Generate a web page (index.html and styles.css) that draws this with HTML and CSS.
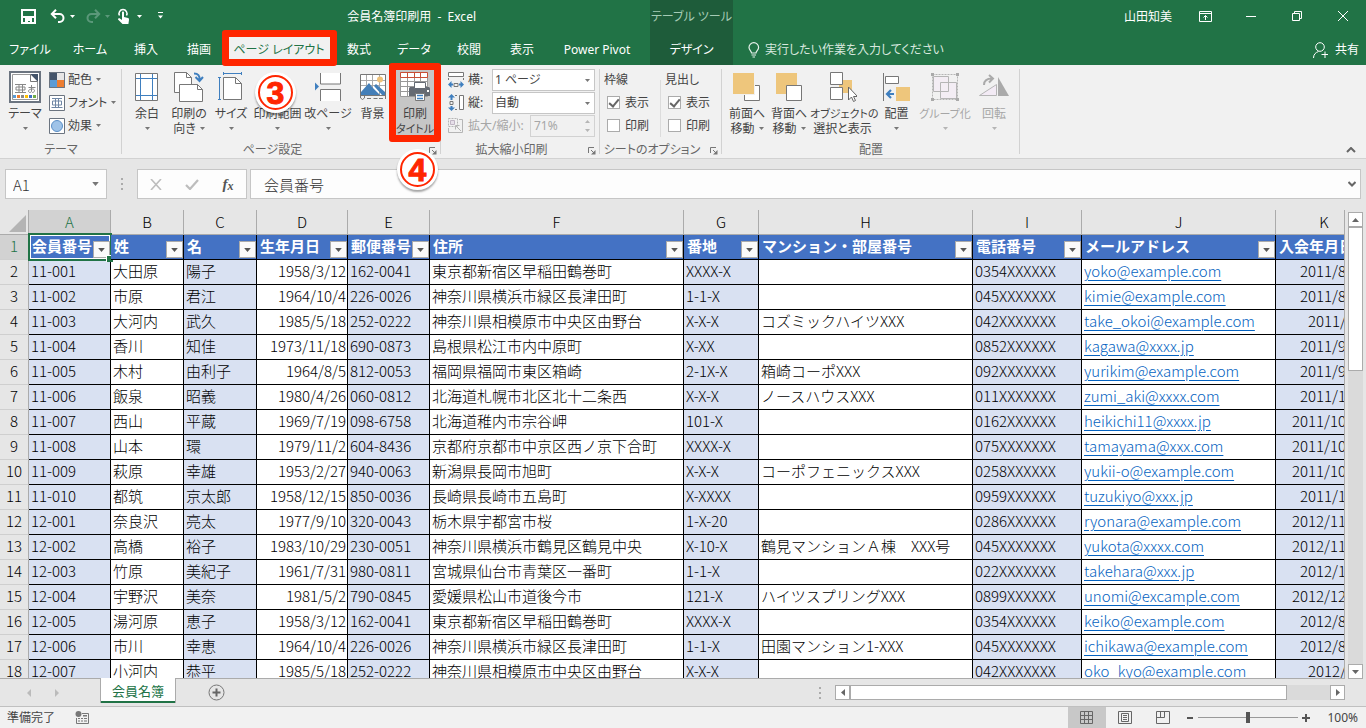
FILE: index.html
```html
<!DOCTYPE html>
<html lang="ja">
<head>
<meta charset="utf-8">
<meta name="viewport" content="width=device-width, initial-scale=1">
<title>会員名簿印刷用 - Excel</title>
<link rel="stylesheet" href="styles.css">
</head>
<body>
<svg class="symbols" aria-hidden="true">
  <symbol id="caret" viewBox="0 0 5 3"><path d="M0 0h5L2.500 3z"/></symbol>
  <symbol id="launch" viewBox="0 0 8 8"><path d="M.5 6V.5H6M3 3l3 3" fill="none" stroke="#777"/><path d="M7.500 3v4.500H3z" fill="#777"/></symbol>
</svg>

<header class="titlebar">
  <div class="title-left">
    <div class="quick">
      <button aria-label="上書き保存"><svg width="15" height="15" viewBox="0 0 15 15"><path d="M1 1h13v13H1z" fill="none" stroke="#fff" stroke-width="2"/><path d="M2 7h11v2H2zM4 9h7v5H9v-2H7v2H4z" fill="#fff"/></svg></button>
      <button aria-label="元に戻す"><svg width="16" height="15" viewBox="0 0 16 15"><path d="M2 5h7.500a4 4 0 0 1 0 8H8M6 .800 1.800 5 6 9.200" fill="none" stroke="#fff" stroke-width="2"/></svg></button>
      <button aria-label="元に戻す一覧"><svg class="caret light"><use href="#caret"/></svg></button>
      <button aria-label="やり直し"><svg width="16" height="15" viewBox="0 0 16 15"><path d="M14 5H6.500a4 4 0 0 0 0 8H8M10 .800 14.200 5 10 9.200" fill="none" stroke="#5b987a" stroke-width="2"/></svg></button>
      <button aria-label="やり直し一覧"><svg class="caret faded"><use href="#caret"/></svg></button>
      <button aria-label="タッチ/マウス モード"><svg width="14" height="17" viewBox="0 0 14 17"><path d="M2.500 7.500a4 4 0 1 1 7 0" fill="none" stroke="#fff" stroke-width="1.500"/><path d="M5 4.500c0-1.400 2-1.400 2 0V9l4 1c1 .300 1 1 1 2l-.600 4H5.500L1 11.500c0-1.200 1.500-1.500 2.200-.700L5 12z" fill="#fff"/></svg></button>
      <button aria-label="モード一覧"><svg class="caret light"><use href="#caret"/></svg></button>
      <button aria-label="クイック アクセス ツール バーのカスタマイズ"><svg width="7" height="8" viewBox="0 0 7 8"><path d="M1 0h5v1H1zM1 3.500h5L3.500 6.500z" fill="#fff"/></svg></button>
    </div>
    <h1 class="doc-title">会員名簿印刷用&nbsp; -&nbsp; Excel</h1>
  </div>
  <div class="context"><span>テーブル ツール</span><button>デザイン</button></div>
  <div class="title-right">
    <button class="user">山田知美</button>
    <button class="win" aria-label="リボンの表示オプション"><svg width="13" height="11" viewBox="0 0 13 11"><path d="M.5.500h12v10H.5zM.5 2.500h12M6.500 9V4.500M4.500 6.500l2-2 2 2" fill="none" stroke="#fff"/></svg></button>
    <button class="win" aria-label="最小化"><svg width="10" height="10" viewBox="0 0 10 10"><path d="M0 5.500h10" stroke="#fff"/></svg></button>
    <button class="win" aria-label="元に戻す(縮小)"><svg width="10" height="10" viewBox="0 0 10 10"><path d="M.5 2.500h7v7h-7zM2.500 2.500v-2h7v7h-2" fill="none" stroke="#fff"/></svg></button>
    <button class="win" aria-label="閉じる"><svg width="10" height="10" viewBox="0 0 10 10"><path d="M0 0l10 10M10 0 0 10" stroke="#fff"/></svg></button>
  </div>
  <nav class="tabs">
    <button>ファイル</button><button>ホーム</button><button>挿入</button><button>描画</button>
    <button class="active">ページ レイアウト<span class="mark"></span></button>
    <button>数式</button><button>データ</button><button>校閲</button><button>表示</button><button>Power Pivot</button>
  </nav>
  <div class="tools">
    <label class="tell"><svg width="12" height="16" viewBox="0 0 12 16"><path d="M3.500 11c0-2-2.500-3-2.500-5.500a4.800 4.800 0 0 1 9.600 0C10.600 8 8 9 8 11zM3.500 13H8M4.500 15H7" fill="none" stroke="#e8f2ec" stroke-width="1.200"/></svg>
    <input type="text" placeholder="実行したい作業を入力してください" aria-label="操作アシスト"></label>
    <button class="share"><svg width="16" height="16" viewBox="0 0 16 16"><circle cx="7" cy="5" r="4.300" fill="none" stroke="#fff"/><path d="M.5 16c0-3.500 2-5.500 5-6.500M12 9.500V16M8.500 12.500H15" fill="none" stroke="#fff"/></svg>共有</button>
  </div>
</header>

<section class="ribbon" aria-label="ページ レイアウト">
  <div class="group g-theme">
    <div class="body">
      <button class="big"><span class="ico"><svg width="32" height="32" viewBox="0 0 32 32"><path d="M1 1h30v30H1z" fill="#fff" stroke="#6b7480" stroke-width="2"/><path d="M3.500 3.500h18l7 7v18h-25z" fill="#fff" stroke="#999"/><path d="M21 3h8v8z" fill="#44546a"/><path d="M21.500 3.500v7h7" fill="#fff" stroke="#777"/><path d="M6 13.500h11M6 21.500h11M7 16h9v3H7zM10 13.500v8M13.500 13.500v8M19.500 16.500h7M22.500 14v6c0 2-3 2-3 0 0-2 6-3 6-.500 0 2-2 2-2.500 2" fill="none" stroke="#888"/><path d="M4 24h3v3H4z" fill="#5b9bd5"/><path d="M8 24h3v3H8z" fill="#ed7d31"/><path d="M12 24h3v3h-3z" fill="#8a8a8a"/><path d="M16 24h3v3h-3z" fill="#ffc000"/><path d="M20 24h3v3h-3z" fill="#4472c4"/><path d="M24 24h3v3h-3z" fill="#70ad47"/></svg></span>テーマ<br><svg class="caret"><use href="#caret"/></svg></button>
      <div class="stack">
        <button><svg width="16" height="16" viewBox="0 0 16 16"><path d="M0 0h8v8H0z" fill="#44546a"/><path d="M8 0h8v8H8z" fill="#e7e6e6"/><path d="M0 8h8v8H0z" fill="#5b9bd5"/><path d="M8 8h8v8H8z" fill="#ed7d31"/><path d="M.5.500h15v15H.5z" fill="none" stroke="#6b7480"/></svg>配色<svg class="caret"><use href="#caret"/></svg></button>
        <button><svg width="16" height="16" viewBox="0 0 16 16"><path d="M.5.500h15v15H.5z" fill="#fff" stroke="#6b7480"/><path d="M3 3.500h10M2.500 12.500h11M3.500 6h9v4h-9zM6.500 3.500v9M9.500 3.500v9" fill="none" stroke="#6f86a5"/></svg>フォント<svg class="caret"><use href="#caret"/></svg></button>
        <button><svg width="16" height="16" viewBox="0 0 16 16"><path d="M.5.500h15v15H.5z" fill="#fff" stroke="#6b7480"/><circle cx="8" cy="8" r="5.500" fill="#9fc3e8" stroke="#5b8fc7"/></svg>効果<svg class="caret"><use href="#caret"/></svg></button>
      </div>
    </div>
    <div class="caption">テーマ</div>
  </div>

  <div class="group g-page">
    <div class="body">
      <button class="big"><span class="ico"><svg width="24" height="30" viewBox="0 0 24 30"><path d="M.5 1.500h22v27H.5z" fill="#fff" stroke="#777"/><path d="M5.500 2v26M17.500 2v26M1 6.500h21M1 23.500h21" stroke="#3f7fbf"/></svg></span>余白<br><svg class="caret"><use href="#caret"/></svg></button>
      <button class="big"><span class="ico"><svg width="30" height="30" viewBox="0 0 30 30"><path d="M.5.500h12l5 5v15H.5z" fill="#fff" stroke="#777"/><path d="M12.500.500v5h5" fill="none" stroke="#777"/><path d="M5.500 12.500h18l5 5v12h-23z" fill="#fff" stroke="#777"/><path d="M23.500 12.500v5h5" fill="none" stroke="#777"/><path d="M20 1.500c4 0 6 2 5.500 6.500M21.500 5l4 4 3.500-4" fill="none" stroke="#3f7fbf" stroke-width="2"/></svg></span>印刷の<br>向き<svg class="caret after"><use href="#caret"/></svg></button>
      <button class="big"><span class="ico"><svg width="26" height="30" viewBox="0 0 26 30"><path d="M5 1.500h19M5.500 0v3M23.500 0v3M1.500 5v23M0 5.500h3M0 27.500h3" stroke="#3f7fbf"/><path d="M5.500 5.500h12l6 6v16h-18z" fill="#fff" stroke="#777"/><path d="M17.500 5.500v6h6" fill="none" stroke="#777"/></svg></span>サイズ<br><svg class="caret"><use href="#caret"/></svg></button>
      <button class="big"><span class="ico"><svg width="26" height="30" viewBox="0 0 26 30"><path d="M9 1.500h8M.5 17v4M25.500 17v4" fill="none" stroke="#777"/></svg></span>印刷範囲<br><svg class="caret"><use href="#caret"/></svg><span class="badge" aria-hidden="true">3</span></button>
      <button class="big"><span class="ico"><svg width="26" height="30" viewBox="0 0 26 30"><path d="M5.500 1v11h20V1M5.500 29V17.500h20V29" fill="#fff" stroke="#777"/><path d="M0 10.500 4 14.500 0 18.500z" fill="#3f7fbf"/></svg></span>改ページ<br><svg class="caret"><use href="#caret"/></svg></button>
      <button class="big"><span class="ico"><svg width="28" height="28" viewBox="0 0 28 28"><path d="M1.500 1.500h25v21h-25z" fill="#fff" stroke="#777"/><path d="M2 7.500h24M2 12.500h24M7.500 2v20M13.500 2v20M20.500 2v20" stroke="#aaa"/><circle cx="21" cy="6.500" r="3" fill="#eec27a"/><path d="M2 22v-3l8-9 4 5 5 5 2 2zM15 13l2-2 9 8v3h-3z" fill="#447fb8"/><path d="M1.500 22v3l2 1.500 2-1.500v-2M8 25.500h4M14.500 25.500h4M20 25.500h4M26.500 22v4" fill="none" stroke="#777"/></svg></span>背景<br>&nbsp;</button>
      <button class="big pressed"><span class="ico"><svg width="30" height="30" viewBox="0 0 30 30"><path d="M.5.500h27v24H.5z" fill="#fff" stroke="#999"/><path d="M1 9.500h26M1 14.500h26M1 19.500h26M7.500 6v18M14.500 6v18M20.500 6v18" stroke="#999"/><path d="M.5.500h27v5H.5zM7.500 1v4M14.500 1v4M20.500 1v4" fill="#fff" stroke="#c84e35"/><path d="M11 15c-1.500 0-2 .5-2 2v7h21v-7c0-1.500-.5-2-2-2z" fill="#646a73"/><path d="M14.500 10.500h11v6h-11z" fill="#fff" stroke="#646a73"/><path d="M15.500 21.500h9v7h-9z" fill="#fff" stroke="#777"/><path d="M17 23.500h6M17 26.500h6" stroke="#3f7fbf" stroke-width="1.500"/><path d="M27 18h2v2h-2z" fill="#fff"/></svg></span>印刷<br><span class="tight">タイトル</span><span class="mark"></span><span class="badge" aria-hidden="true">4</span></button>
    </div>
    <div class="caption">ページ設定<button aria-label="ページ設定の詳細"><svg width="8" height="8"><use href="#launch"/></svg></button></div>
  </div>

  <div class="group g-scale">
    <div class="body stack">
      <div class="field"><svg width="16" height="17" viewBox="0 0 16 17"><path d="M.5 1.500h15v4H.5z" fill="#fff" stroke="#777"/><path d="M.5 7v2M15.500 7v2M6 12.500h4v3H6z" fill="none" stroke="#777"/><path d="M0 13.500 3.500 10v2.500H5v2H3.500V17zM16 13.500 12.500 10v2.500H11v2h1.500V17z" fill="#3f7fbf"/></svg>
        <label for="wide">横:</label><span class="select"><select id="wide"><option>1 ページ</option></select><svg class="caret"><use href="#caret"/></svg></span></div>
      <div class="field"><svg width="16" height="17" viewBox="0 0 16 17"><path d="M11.500 1.500h4v14h-4z" fill="#fff" stroke="#777"/><path d="M7 1.500h2M7 15.500h2M2 7.500h3v3H2z" fill="none" stroke="#777"/><path d="M3.500 0 7 3.500H4.500V6h-2V3.500H0zM3.500 17 7 13.500H4.500V12h-2v1.500H0z" fill="#3f7fbf"/></svg>
        <label for="tall">縦:</label><span class="select"><select id="tall"><option>自動</option></select><svg class="caret"><use href="#caret"/></svg></span></div>
      <div class="field off"><svg width="16" height="17" viewBox="0 0 16 17"><path d="M.5 1.500h9v8h-9z" fill="none" stroke="#b5b5b5" stroke-dasharray="2 1"/><path d="M2.500 3.500h4v4h-4z" fill="#e6dfe9" stroke="#c0b5c4"/><path d="M.5 11v4.500h14V2.500H11M13 14 8 9M7.500 12.500V8.500h4" fill="none" stroke="#b5b5b5"/></svg>
        <label for="scale">拡大/縮小:</label><span class="spin"><input id="scale" type="text" value="71%" disabled><svg width="5" height="12" viewBox="0 0 5 12"><path d="M0 3l2.500-3L5 3zM0 9h5L2.500 12z" fill="#b5b5b5"/></svg></span></div>
    </div>
    <div class="caption">拡大縮小印刷<button aria-label="拡大縮小の詳細"><svg width="8" height="8"><use href="#launch"/></svg></button></div>
  </div>

  <div class="group g-opts">
    <div class="body">
      <fieldset><legend>枠線</legend><label><input type="checkbox" checked>表示</label><label><input type="checkbox">印刷</label></fieldset>
      <fieldset><legend>見出し</legend><label><input type="checkbox" checked>表示</label><label><input type="checkbox">印刷</label></fieldset>
    </div>
    <div class="caption">シートのオプション<button aria-label="シートの詳細"><svg width="8" height="8"><use href="#launch"/></svg></button></div>
  </div>

  <div class="group g-arrange">
    <div class="body">
      <button class="big"><span class="ico"><svg width="28" height="30" viewBox="0 0 28 30"><path d="M11.500 13.500h15v15h-15z" fill="#fff" stroke="#777"/><path d="M0 1h22v22H0z" fill="#f1f1f1"/><path d="M0 1h21v21H0z" fill="#eec67c"/></svg></span>前面へ<br>移動<svg class="caret after"><use href="#caret"/></svg></button>
      <button class="big"><span class="ico"><svg width="28" height="30" viewBox="0 0 28 30"><path d="M1 1h21v21H1z" fill="#eec67c"/><path d="M11.500 13.500h15v15h-15z" fill="#fff" stroke="#777"/></svg></span>背面へ<br>移動<svg class="caret after"><use href="#caret"/></svg></button>
      <button class="big"><span class="ico"><svg width="28" height="30" viewBox="0 0 28 30"><path d="M10 8h13v13H10z" fill="#eec67c"/><path d="M1.500.500h12v12h-12zM1.500 15.500h12v12h-12z" fill="#fff" stroke="#777"/><path d="M19.500 15v13l3-3 2 4.500 2-1-2-4h4z" fill="#fff" stroke="#666"/></svg></span><span class="tight">オブジェクトの</span><br>選択と表示</button>
      <button class="big"><span class="ico"><svg width="28" height="30" viewBox="0 0 28 30"><path d="M.5 1v28" stroke="#777"/><path d="M2.500 4.500h13v7h-13z" fill="#fff" stroke="#777"/><path d="M13 15h14v14H13z" fill="#eec67c"/><path d="M11 22H5M8 18l-4 4 4 4" fill="none" stroke="#3f7fbf" stroke-width="2.200"/></svg></span>配置<br><svg class="caret"><use href="#caret"/></svg></button>
      <button class="big" disabled><span class="ico"><svg width="28" height="30" viewBox="0 0 28 30"><path d="M1.500 2.500h25v25h-25z" fill="none" stroke="#b5b5b5" stroke-dasharray="2 1"/><path d="M2.500 4.500h15v15h-15zM9.500 10.500h16v16h-16z" fill="#f3ebf5" fill-opacity=".7" stroke="#b5b5b5"/><path d="M0 1h3v3H0zM25 1h3v3h-3zM0 26h3v3H0zM25 26h3v3h-3z" fill="#aaa"/></svg></span><span class="tight">グループ化</span><br><svg class="caret"><use href="#caret"/></svg></button>
      <button class="big" disabled><span class="ico"><svg width="32" height="30" viewBox="0 0 32 30"><path d="M1.500 23.500 18.500 12.500v11z" fill="#f3ebf5" stroke="#b5b5b5"/><path d="M20 5v19h11z" fill="#aaa"/><path d="M6 13c0-5 3-6.500 8-6.500M11 3l4 3.500-4 4" fill="none" stroke="#aaa" stroke-width="2"/></svg></span>回転<br><svg class="caret"><use href="#caret"/></svg></button>
    </div>
    <div class="caption">配置</div>
  </div>
  <button class="collapse" aria-label="リボンを折りたたむ"><svg width="10" height="6" viewBox="0 0 10 6"><path d="M1 5l4-4 4 4" fill="none" stroke="#666" stroke-width="2"/></svg></button>
</section>

<section class="formula">
  <div class="namebox"><input type="text" value="A1" aria-label="名前ボックス"><svg class="drop" viewBox="0 0 5 3"><use href="#caret"/></svg></div>
  <span class="dots"></span>
  <div class="fx">
    <button aria-label="キャンセル"><svg width="12" height="11" viewBox="0 0 12 11"><path d="M1 0l10 11M11 0 1 11" stroke="#bdbdbd" stroke-width="1.600"/></svg></button>
    <button aria-label="入力"><svg width="14" height="11" viewBox="0 0 14 11"><path d="M1 6l4 4 8-9" fill="none" stroke="#bdbdbd" stroke-width="2.200"/></svg></button>
    <button aria-label="関数の挿入"><i>f<sub>x</sub></i></button>
  </div>
  <div class="entry"><input type="text" value="会員番号" aria-label="数式バー"><svg width="8" height="6" viewBox="0 0 8 6"><path d="M.5 1 4 4.500 7.500 1" fill="none" stroke="#666" stroke-width="2"/></svg></div>
</section>

<main class="sheet">
  <div class="viewport">
    <table>
      <colgroup><col class="c0"><col class="c82"><col class="c73"><col class="c73"><col class="c91"><col class="c82"><col class="cF"><col class="cG"><col class="cH"><col class="cI"><col class="cJ"><col class="cK"></colgroup>
      <thead><tr><th class="corner"><svg width="17" height="17" viewBox="0 0 17 17"><path d="M17 0v17H0z" fill="#b4b4b4"/></svg></th><th class="on">A</th><th>B</th><th>C</th><th>D</th><th>E</th><th>F</th><th>G</th><th>H</th><th>I</th><th>J</th><th>K</th></tr></thead>
      <tbody>
        <tr class="fields"><th class="on">1</th><td class="cursor">会員番号<button aria-label="会員番号のフィルター"><svg><use href="#caret"/></svg></button></td><td>姓<button aria-label="姓のフィルター"><svg><use href="#caret"/></svg></button></td><td>名<button aria-label="名のフィルター"><svg><use href="#caret"/></svg></button></td><td>生年月日<button aria-label="生年月日のフィルター"><svg><use href="#caret"/></svg></button></td><td>郵便番号<button aria-label="郵便番号のフィルター"><svg><use href="#caret"/></svg></button></td><td>住所<button aria-label="住所のフィルター"><svg><use href="#caret"/></svg></button></td><td>番地<button aria-label="番地のフィルター"><svg><use href="#caret"/></svg></button></td><td>マンション・部屋番号<button aria-label="マンションのフィルター"><svg><use href="#caret"/></svg></button></td><td>電話番号<button aria-label="電話番号のフィルター"><svg><use href="#caret"/></svg></button></td><td>メールアドレス<button aria-label="メールアドレスのフィルター"><svg><use href="#caret"/></svg></button></td><td>入会年月日</td></tr>
        <tr><th>2</th><td>11-001</td><td>大田原</td><td>陽子</td><td>1958/3/12</td><td>162-0041</td><td>東京都新宿区早稲田鶴巻町</td><td>XXXX-X</td><td></td><td>0354XXXXXX</td><td><a href="#">yoko@example.com</a></td><td>2011/8/10</td></tr>
        <tr><th>3</th><td>11-002</td><td>市原</td><td>君江</td><td>1964/10/4</td><td>226-0026</td><td>神奈川県横浜市緑区長津田町</td><td>1-1-X</td><td></td><td>045XXXXXXX</td><td><a href="#">kimie@example.com</a></td><td>2011/8/20</td></tr>
        <tr><th>4</th><td>11-003</td><td>大河内</td><td>武久</td><td>1985/5/18</td><td>252-0222</td><td>神奈川県相模原市中央区由野台</td><td>X-X-X</td><td>コズミックハイツXXX</td><td>042XXXXXXX</td><td><a href="#">take_okoi@example.com</a></td><td>2011/9/1</td></tr>
        <tr><th>5</th><td>11-004</td><td>香川</td><td>知佳</td><td>1973/11/18</td><td>690-0873</td><td>島根県松江市内中原町</td><td>X-XX</td><td></td><td>0852XXXXXX</td><td><a href="#">kagawa@xxxx.jp</a></td><td>2011/9/10</td></tr>
        <tr><th>6</th><td>11-005</td><td>木村</td><td>由利子</td><td>1964/8/5</td><td>812-0053</td><td>福岡県福岡市東区箱崎</td><td>2-1X-X</td><td>箱崎コーポXXX</td><td>092XXXXXXX</td><td><a href="#">yurikim@example.com</a></td><td>2011/9/20</td></tr>
        <tr><th>7</th><td>11-006</td><td>飯泉</td><td>昭義</td><td>1980/4/26</td><td>060-0812</td><td>北海道札幌市北区北十二条西</td><td>X-X-X</td><td>ノースハウスXXX</td><td>011XXXXXXX</td><td><a href="#">zumi_aki@xxxx.com</a></td><td>2011/10/1</td></tr>
        <tr><th>8</th><td>11-007</td><td>西山</td><td>平蔵</td><td>1969/7/19</td><td>098-6758</td><td>北海道稚内市宗谷岬</td><td>101-X</td><td></td><td>0162XXXXXX</td><td><a href="#">heikichi11@xxxx.jp</a></td><td>2011/10/10</td></tr>
        <tr><th>9</th><td>11-008</td><td>山本</td><td>環</td><td>1979/11/2</td><td>604-8436</td><td>京都府京都市中京区西ノ京下合町</td><td>XXXX-X</td><td></td><td>075XXXXXXX</td><td><a href="#">tamayama@xxx.com</a></td><td>2011/10/20</td></tr>
        <tr><th>10</th><td>11-009</td><td>萩原</td><td>幸雄</td><td>1953/2/27</td><td>940-0063</td><td>新潟県長岡市旭町</td><td>X-X-X</td><td>コーポフェニックスXXX</td><td>0258XXXXXX</td><td><a href="#">yukii-o@example.com</a></td><td>2011/10/25</td></tr>
        <tr><th>11</th><td>11-010</td><td>都筑</td><td>京太郎</td><td>1958/12/15</td><td>850-0036</td><td>長崎県長崎市五島町</td><td>X-XXXX</td><td></td><td>0959XXXXXX</td><td><a href="#">tuzukiyo@xxx.jp</a></td><td>2011/11/1</td></tr>
        <tr><th>12</th><td>12-001</td><td>奈良沢</td><td>亮太</td><td>1977/9/10</td><td>320-0043</td><td>栃木県宇都宮市桜</td><td>1-X-20</td><td></td><td>0286XXXXXX</td><td><a href="#">ryonara@example.com</a></td><td>2012/11/10</td></tr>
        <tr><th>13</th><td>12-002</td><td>高橋</td><td>裕子</td><td>1983/10/29</td><td>230-0051</td><td>神奈川県横浜市鶴見区鶴見中央</td><td>X-10-X</td><td>鶴見マンションＡ棟　XXX号</td><td>045XXXXXXX</td><td><a href="#">yukota@xxxx.com</a></td><td>2012/11/20</td></tr>
        <tr><th>14</th><td>12-003</td><td>竹原</td><td>美紀子</td><td>1961/7/31</td><td>980-0811</td><td>宮城県仙台市青葉区一番町</td><td>1-1-X</td><td></td><td>022XXXXXXX</td><td><a href="#">takehara@xxx.jp</a></td><td>2012/12/1</td></tr>
        <tr><th>15</th><td>12-004</td><td>宇野沢</td><td>美奈</td><td>1981/5/2</td><td>790-0845</td><td>愛媛県松山市道後今市</td><td>121-X</td><td>ハイツスプリングXXX</td><td>0899XXXXXX</td><td><a href="#">unomi@excample.com</a></td><td>2012/12/10</td></tr>
        <tr><th>16</th><td>12-005</td><td>湯河原</td><td>恵子</td><td>1958/3/12</td><td>162-0041</td><td>東京都新宿区早稲田鶴巻町</td><td>XXXX-X</td><td></td><td>0354XXXXXX</td><td><a href="#">keiko@example.com</a></td><td>2012/8/10</td></tr>
        <tr><th>17</th><td>12-006</td><td>市川</td><td>幸恵</td><td>1964/10/4</td><td>226-0026</td><td>神奈川県横浜市緑区長津田町</td><td>1-1-X</td><td>田園マンション1-XXX</td><td>045XXXXXXX</td><td><a href="#">ichikawa@example.com</a></td><td>2012/8/20</td></tr>
        <tr><th>18</th><td>12-007</td><td>小河内</td><td>恭平</td><td>1985/5/18</td><td>252-0222</td><td>神奈川県相模原市中央区由野台</td><td>X-X-X</td><td></td><td>042XXXXXXX</td><td><a href="#">oko_kyo@example.com</a></td><td>2012/9/1</td></tr>
      </tbody>
    </table>
  </div>
  <div class="vscroll">
    <button aria-label="上へ"><svg width="7" height="4" viewBox="0 0 7 4"><path d="M0 4h7L3.500 0z" fill="#666"/></svg></button>
    <div class="track"><div class="thumb"></div></div>
    <button aria-label="下へ"><svg width="7" height="4" viewBox="0 0 7 4"><path d="M0 0h7L3.500 4z" fill="#666"/></svg></button>
  </div>
</main>

<section class="sheetbar">
  <div class="nav"><button aria-label="前のシート"><svg width="4" height="8" viewBox="0 0 4 8"><path d="M4 0v8L0 4z" fill="#bbb"/></svg></button><button aria-label="次のシート"><svg width="4" height="8" viewBox="0 0 4 8"><path d="M0 0v8l4-4z" fill="#bbb"/></svg></button></div>
  <button class="sheet-tab">会員名簿</button>
  <button class="add" aria-label="新しいシート"><svg width="17" height="17" viewBox="0 0 17 17"><circle cx="8.500" cy="8.500" r="7.500" fill="none" stroke="#777"/><path d="M8.500 4.500v8M4.500 8.500h8" stroke="#666" stroke-width="2"/></svg></button>
  <span class="dots"></span>
  <div class="hscroll">
    <button aria-label="左へ"><svg width="4" height="7" viewBox="0 0 4 7"><path d="M4 0v7L0 3.500z" fill="#666"/></svg></button>
    <div class="track"><div class="thumb"></div></div>
    <button aria-label="右へ"><svg width="4" height="7" viewBox="0 0 4 7"><path d="M0 0v7l4-3.500z" fill="#666"/></svg></button>
  </div>
</section>

<footer class="status">
  <span class="ready">準備完了</span>
  <svg width="14" height="13" viewBox="0 0 14 13"><path d="M7 2.500h6.500v10h-12V7" fill="none" stroke="#777"/><circle cx="3.500" cy="3" r="3" fill="#777"/><path d="M8 4h4v1.500H8zM3 7h2v1H3zM6 7h2v1H6zM9 7h3v1H9zM3 9.500h2v1H3zM6 9.500h2v1H6zM9 9.500h3v1H9z" fill="#777"/></svg>
  <div class="views">
    <button class="on" aria-label="標準"><svg width="14" height="13" viewBox="0 0 14 13"><path d="M.5.500h12v12H.5zM4.500.500v12M8.500.500v12M.5 4.500h12M.5 8.500h12" fill="none" stroke="#666"/></svg></button>
    <button aria-label="ページ レイアウト"><svg width="14" height="13" viewBox="0 0 14 13"><path d="M.5.500h13v12H.5zM3.500 2.500h7v8h-7zM5 4.500h4M5 6.500h4M5 8.500h4" fill="none" stroke="#666"/></svg></button>
    <button aria-label="改ページ プレビュー"><svg width="14" height="13" viewBox="0 0 14 13"><path d="M.5.500h13v12H.5zM4.500.500v6M.5 6.500h8v-6" fill="none" stroke="#666"/></svg></button>
  </div>
  <button class="step" aria-label="縮小"><svg width="8" height="8" viewBox="0 0 8 8"><path d="M1 4h6" stroke="#555" stroke-width="2"/></svg></button>
  <input class="zoom" type="range" min="0" max="100" value="50" aria-label="ズーム">
  <button class="step" aria-label="拡大"><svg width="8" height="8" viewBox="0 0 8 8"><path d="M0 4h8M4 0v8" stroke="#555" stroke-width="2"/></svg></button>
  <span class="percent">100%</span>
</footer>
</body>
</html>
```
FILE: styles.css
```css
* { box-sizing: border-box; }
body {
  margin: 0;
  height: 100vh;
  display: flex;
  flex-direction: column;
  overflow: hidden;
  background: #e6e6e6;
  color: #444;
  font: 12px/15px "Noto Sans", "Noto Sans CJK JP", sans-serif;
  font-feature-settings: "palt";
}
button, input, select {
  margin: 0;
  padding: 0;
  border: 0;
  border-radius: 0;
  background: none;
  color: inherit;
  font: inherit;
  font-feature-settings: inherit;
  white-space: nowrap;
}
svg { flex: none; }
.symbols { position: absolute; width: 0; height: 0; }
.caret { width: 5px; height: 3px; fill: #777; }
.caret.light { fill: #fff; }
.caret.faded { fill: #5b987a; }

/* title bar and tabs */
.titlebar {
  flex: none;
  display: grid;
  grid-template: 32px 33px / 650px 83px 1fr;
  background: #217346;
  color: #fff;
}
.title-left { display: flex; justify-content: space-between; align-items: center; padding: 0 174px 0 21px; }
.quick { display: grid; grid-template-columns: 29px 20px 15px 20px 12px 20px 20px 12px; height: 32px; }
.quick button { display: flex; align-items: center; }
.doc-title { margin: 0; font-size: 12px; font-weight: 400; white-space: nowrap; }
.context {
  grid-area: 1 / 2 / 3 / 3;
  display: grid;
  grid-template-rows: 32px 33px;
  align-items: center;
  justify-items: center;
  background: #1e5c3a;
}
.context span { color: #a5cbb5; white-space: nowrap; }
.context button { padding-top: 2px; }
.title-right { display: flex; justify-content: flex-end; }
.user { padding: 0 10px; }
.win { width: 46px; display: flex; align-items: center; justify-content: center; }
.tabs { display: grid; grid-template-columns: 60px 60px 52px 54px 106px 54px 56px 54px 52px 98px; grid-area: 2 / 1; }
.tabs button { padding-top: 2px; }
.tabs .active { position: relative; background: #f1f1f1; color: #217346; }
.mark { position: absolute; border: 7px solid #ff2600; border-radius: 3px; z-index: 2; }
.tabs .mark { inset: -2px -5px -1px -4px; }
.tools { display: flex; justify-content: space-between; padding: 2px 7px 0 15px; }
.tell { display: flex; align-items: center; gap: 5px; }
.tell input { width: 220px; }
.tell input::placeholder { color: #d8e8df; opacity: 1; }
.share { display: flex; align-items: center; gap: 6px; }

/* ribbon */
.ribbon { flex: none; display: flex; background: #f1f1f1; border-bottom: 1px solid #d2d2d2; }
.group { position: relative; display: flex; flex-direction: column; padding-top: 3px; }
.group::after { content: ""; position: absolute; top: 4px; bottom: 4px; right: 0; width: 1px; background: #d2d2d2; }
.g-theme { width: 122px; }
.g-page { width: 319px; }
.g-scale { width: 159px; }
.g-opts { width: 122px; }
.g-arrange { width: 298px; }
.body { display: flex; height: 73px; }
.caption { position: relative; height: 17px; text-align: center; color: #666; line-height: 17px; }
.caption button { position: absolute; right: 4px; top: 6px; width: 8px; height: 8px; display: flex; }
.g-page .caption, .g-scale .caption, .g-opts .caption { padding-right: 18px; }
.big { position: relative; display: block; height: 66px; margin-top: 2px; padding-top: 1px; text-align: center; line-height: 15px; }
.big .caret { margin-bottom: 3px; }
.big .after { margin-left: 4px; }
.big:disabled { color: #a6a6a6; }
.big:disabled .caret { fill: #b5b5b5; }
.tight { font-size: 11px; }
.ico { display: flex; height: 32px; margin-bottom: 3px; align-items: center; justify-content: center; }
.g-theme .body { padding-left: 4px; }
.g-theme .big { width: 42px; }
.stack { display: flex; flex-direction: column; }
.g-theme .stack { padding-left: 3px; }
.g-theme .stack button { height: 23px; display: flex; align-items: center; gap: 3px; }
.g-theme .stack .caret { margin-left: 1px; }
.g-page .body { display: grid; grid-template-columns: 42px 42px 42px 51px 50px 39px 46px; padding-left: 4px; }
.pressed { background: linear-gradient(#c6c6c6, #c6c6c6) center / 38px 100% no-repeat; }
.pressed .mark { inset: -7px -3px -6px; }
.badge {
  position: absolute;
  z-index: 3;
  left: 6px;
  top: 5px;
  width: 35px;
  height: 35px;
  border: 2px solid #ff2600;
  border-radius: 50%;
  background: #fff;
  box-shadow: 0 0 0 3px #fff, 0 2px 2px 3px rgba(0, 0, 0, .35);
  color: #ff2600;
  font: bold 32px/32px "Liberation Sans", Arial, sans-serif;
  -webkit-text-stroke: 1px #ff2600;
  text-align: center;
}
.pressed .badge { top: 82px; left: 8px; }
.field { height: 23px; display: flex; align-items: center; padding: 0 5px 0 7px; gap: 4px; white-space: nowrap; }
.field > svg { width: 16px; }
.select { position: relative; width: 103px; margin-left: auto; }
.select select { width: 100%; height: 22px; border: 1px solid #c6c6c6; background: #fff; padding: 0 2px; appearance: none; display: block; }
.select .caret { position: absolute; right: 5px; top: 10px; }
.off { color: #a6a6a6; }
.spin { position: relative; width: 65px; margin-left: auto; }
.spin input { width: 100%; height: 22px; border: 1px solid #d2d2d2; padding: 0 3px; display: block; }
.spin svg { position: absolute; right: 5px; top: 5px; }
fieldset { margin: 0; border: 0; padding: 0 0 0 4px; width: 60px; }
fieldset + fieldset { border-left: 1px solid #dcdcdc; }
.g-opts .body { height: 69px; margin-bottom: 4px; }
legend { padding: 0; height: 23px; line-height: 23px; }
fieldset label { display: flex; align-items: center; gap: 5px; height: 23px; padding-left: 3px; white-space: nowrap; }
input[type="checkbox"] { appearance: none; flex: none; width: 13px; height: 13px; border: 1px solid #ababab; background: #fff; display: grid; place-items: center; }
input[type="checkbox"]:checked::before { content: ""; width: 4px; height: 8px; border: solid #666; border-width: 0 2px 2px 0; transform: rotate(40deg); margin-top: -2px; }
.g-arrange .body { display: grid; grid-template-columns: 42px 42px 65px 43px 54px 44px; padding-left: 4px; }
.collapse { margin-left: auto; align-self: flex-end; padding: 4px 10px 5px; display: flex; }

/* formula bar */
.formula, .viewport, .sheet-tab { font-family: "Noto Sans CJK JP", sans-serif; font-feature-settings: normal; }
.formula { flex: none; display: flex; padding: 10px 5px 11px; font-size: 15px; font-weight: 300; color: #333; }
.formula > div { height: 30px; display: flex; align-items: center; background: #fdfdfd; border: 1px solid #c6c6c6; }
.namebox { width: 102px; padding: 0 7px; }
.namebox input { flex: 1; min-width: 0; }
.drop { width: 7px; height: 4px; fill: #777; }
.dots { width: 2px; height: 12px; align-self: center; background: repeating-linear-gradient(#ababab 0 2px, transparent 2px 5px); }
.formula .dots { margin: 0 14px; }
.fx { width: 110px; }
.fx button { flex: 1; display: flex; justify-content: center; align-items: center; }
.fx i { font: italic bold 15px/18px "Liberation Serif", serif; color: #555; }
.fx sub { font-size: 12px; line-height: 0; vertical-align: -1px; }
.entry { flex: 1; margin-left: 3px; padding: 0 4px 0 13px; }
.entry input { flex: 1; min-width: 0; }

/* grid */
.sheet { flex: 1; min-height: 0; display: flex; }
.viewport { flex: 1; min-width: 0; overflow: hidden; border: solid #ababab; border-width: 0 1px 1px 0; }
table { width: 1373px; table-layout: fixed; border-spacing: 0; color: #000; font-size: 15px; line-height: 22px; font-weight: 300; }
.c0 { width: 29px; }
.c82 { width: 82px; }
.c73 { width: 73px; }
.c91 { width: 91px; }
.cF { width: 254px; }
.cG { width: 75px; }
.cH { width: 214px; }
.cI { width: 109px; }
.cJ { width: 194px; }
.cK { width: 97px; }
th { height: 25px; padding: 0; background: #e6e6e6; font-weight: 300; border: solid #ababab; border-width: 0 1px 1px 0; text-align: center; }
tbody th { border-bottom-color: #cfcfcf; padding-bottom: 2px; }
.corner svg { display: block; margin: 2px 2px 0 auto; }
th.on { background: #d2d2d2; color: #217346; }
td { height: 25px; padding: 0 1px 2px 2px; overflow: hidden; white-space: nowrap; border: solid #000; border-width: 0 1px 1px 0; background: #fff; }
td:nth-child(even) { background: #d9e1f2; }
td:nth-child(5), td:nth-child(12) { text-align: right; }
td:nth-child(12) { padding-right: 4px; }
td a { color: #0563c1; text-decoration: underline; text-underline-offset: 3px; }
.fields td { position: relative; background: #4472c4; color: #fff; font-weight: 700; text-align: left; padding-left: 3px; }
.fields button { position: absolute; right: 0; bottom: 1px; width: 17px; height: 17px; border: 1px solid #ababab; background: #fafafa; display: grid; place-items: center; }
.fields button svg { width: 7px; height: 4px; fill: #555; }
.fields .cursor { overflow: visible; }
.cursor::before { content: ""; position: absolute; inset: -2px -2px -2px -1px; border: 2px solid #217346; box-shadow: inset 0 0 0 1px #fff; }
.cursor::after { content: ""; position: absolute; right: -3px; bottom: -3px; width: 6px; height: 6px; background: #217346; border: solid #fff; border-width: 1px 0 0 1px; }

/* scroll bars */
.vscroll { width: 21px; padding: 2px 3px 0; display: flex; flex-direction: column; }
.vscroll button, .hscroll button { flex: none; width: 15px; height: 15px; display: grid; place-items: center; border: 1px solid #ababab; background: #fff; }
.track { flex: 1; background: #dadada; }
.thumb { background: #fff; border: 1px solid #ababab; }
.vscroll .thumb { height: 33%; }
.hscroll .thumb { width: 91%; height: 15px; }
.hscroll { width: 510px; display: flex; margin: 6px 21px 0 14px; height: 15px; }

/* sheet tabs */
.sheetbar { flex: none; height: 28px; display: flex; border-bottom: 1px solid #c0c0c0; }
.nav { width: 100px; display: flex; align-items: center; padding-left: 27px; gap: 24px; }
.nav button { display: flex; }
.sheet-tab { height: 25px; margin-top: -1px; padding: 0 11px; background: #fff; border: solid #ababab; border-width: 0 1px; box-shadow: inset 0 -2px #217346; color: #217346; font-size: 13px; }
.add { display: flex; align-items: center; margin-left: 32px; }
.sheetbar .dots { margin-left: auto; }

/* status bar */
.status { flex: none; height: 21px; display: flex; align-items: center; padding: 0 8px 0 7px; background: #f1f1f1; }
.ready { margin-right: 20px; }
.views { display: flex; height: 21px; margin-left: auto; }
.views button { width: 38px; display: grid; place-items: center; }
.views .on { background: #c8c8c8; }
.step { display: flex; margin: 0 4px; }
.zoom { appearance: none; width: 100px; height: 12px; background: linear-gradient(#999, #999) center / 100% 1px no-repeat; }
.zoom::-webkit-slider-thumb { appearance: none; width: 4px; height: 11px; background: #555; }
.percent { width: 44px; text-align: right; }
```
